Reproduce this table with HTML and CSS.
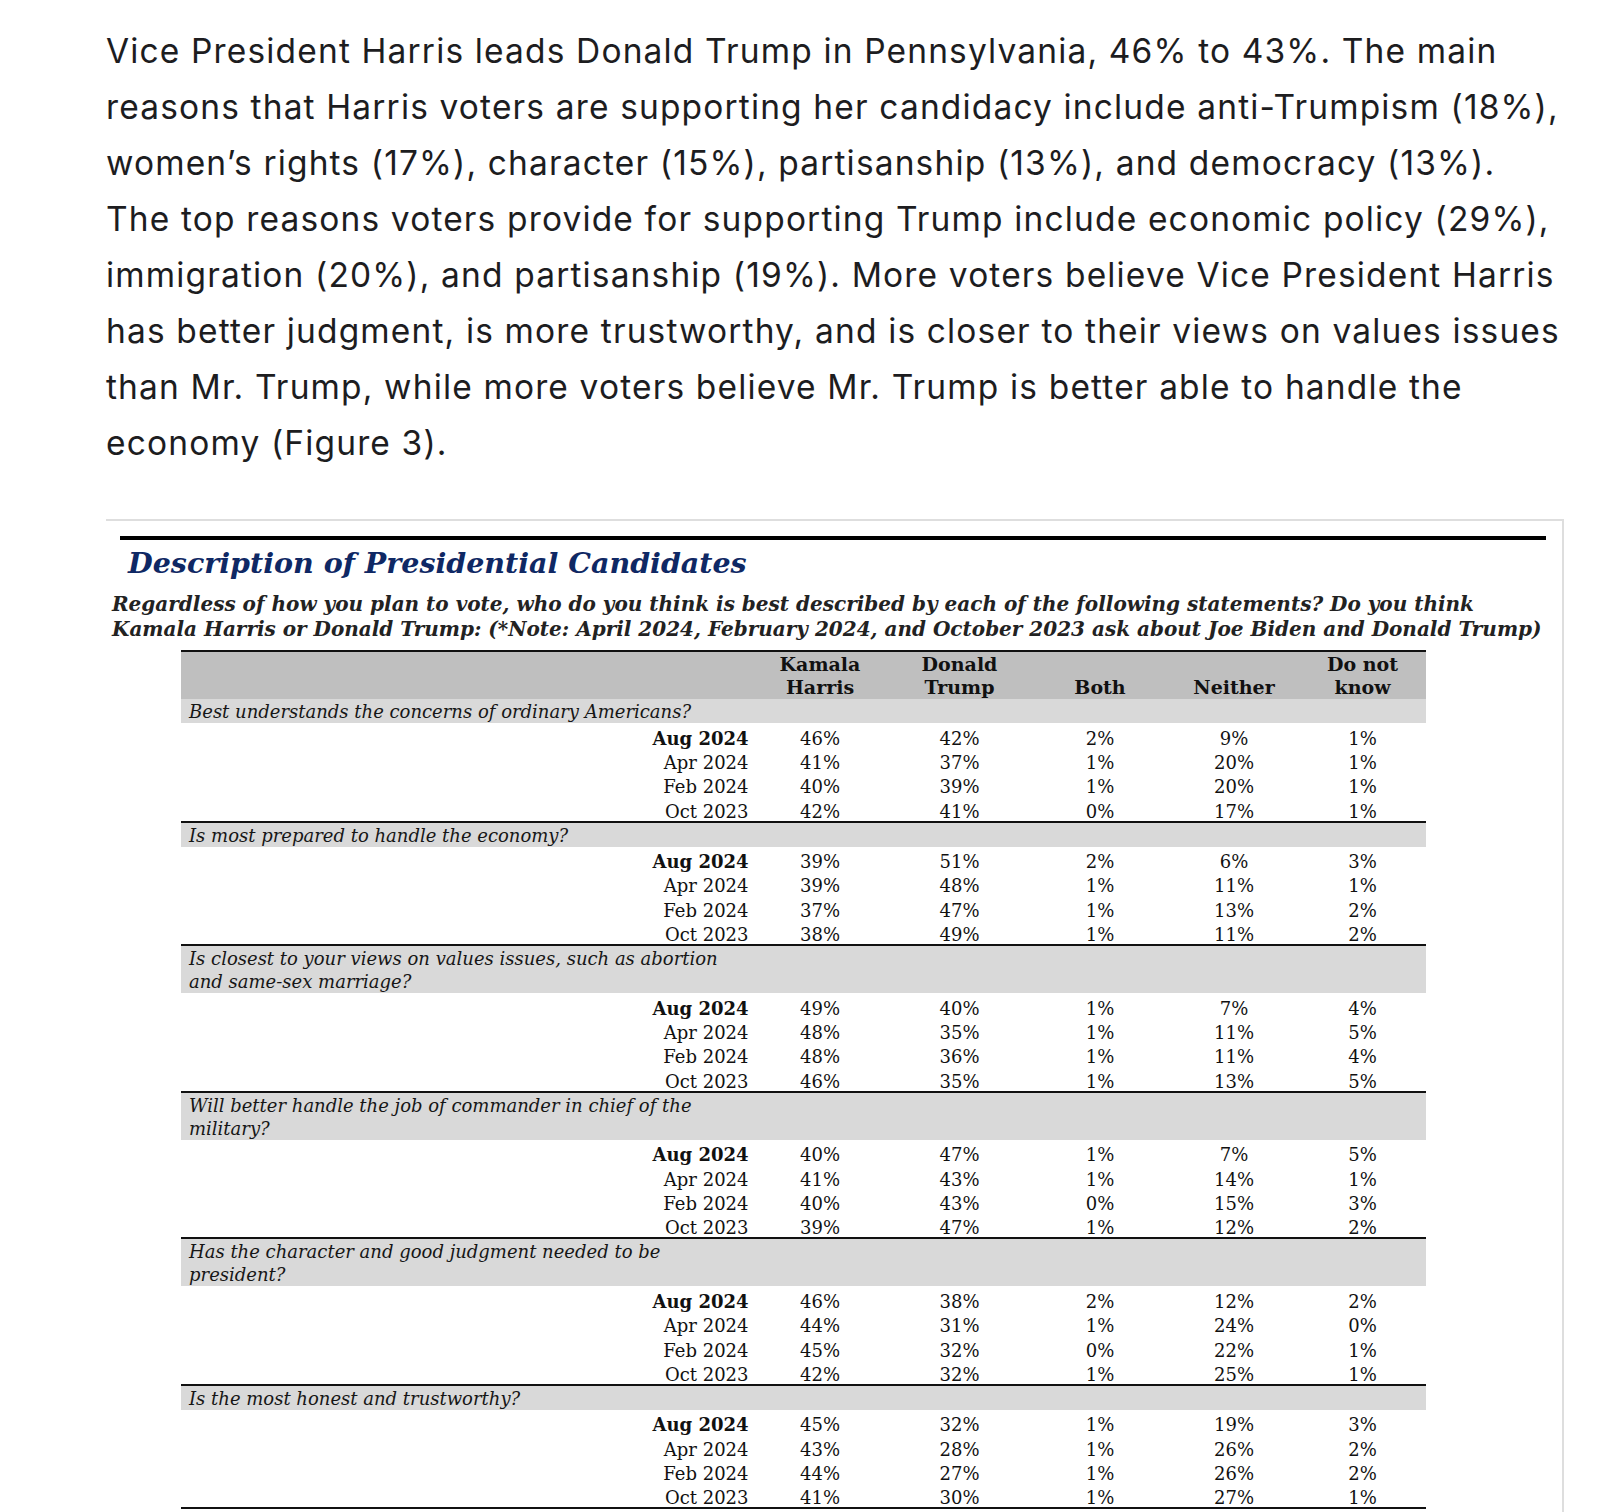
FILE: index.html
```html
<!DOCTYPE html>
<html lang="en">
<head>
<meta charset="utf-8">
<title>Description of Presidential Candidates</title>
<link rel="stylesheet" href="styles.css">
</head>
<body>
<main class="page">
  <p class="lead">Vice President Harris leads Donald Trump in Pennsylvania, 46% to 43%. The main reasons that Harris voters are supporting her candidacy include anti-Trumpism (18%), women’s rights (17%), character (15%), partisanship (13%), and democracy (13%). The top reasons voters provide for supporting Trump include economic policy (29%), immigration (20%), and partisanship (19%). More voters believe Vice President Harris has better judgment, is more trustworthy, and is closer to their views on values issues than Mr. Trump, while more voters believe Mr. Trump is better able to handle the economy (Figure 3).</p>

  <figure class="figure">
    <div class="rule"></div>
    <h2 class="fig-title">Description of Presidential Candidates</h2>
    <p class="fig-sub">Regardless of how you plan to vote, who do you think is best described by each of the following statements? Do you think<br>Kamala Harris or Donald Trump: (*Note: April 2024, February 2024, and October 2023 ask about Joe Biden and Donald Trump)</p>

    <div class="tbl">
      <div class="thead">
        <div></div>
        <div class="th">Kamala<br>Harris</div>
        <div class="th">Donald<br>Trump</div>
        <div class="th">Both</div>
        <div class="th">Neither</div>
        <div class="th">Do not<br>know</div>
      </div>

      <section class="sec">
        <div class="q">Best understands the concerns of ordinary Americans?</div>
        <div class="row"><div class="d b">Aug 2024</div><div>46%</div><div>42%</div><div>2%</div><div>9%</div><div>1%</div></div>
        <div class="row"><div class="d">Apr 2024</div><div>41%</div><div>37%</div><div>1%</div><div>20%</div><div>1%</div></div>
        <div class="row"><div class="d">Feb 2024</div><div>40%</div><div>39%</div><div>1%</div><div>20%</div><div>1%</div></div>
        <div class="row"><div class="d">Oct 2023</div><div>42%</div><div>41%</div><div>0%</div><div>17%</div><div>1%</div></div>
      </section>

      <section class="sec">
        <div class="q">Is most prepared to handle the economy?</div>
        <div class="row"><div class="d b">Aug 2024</div><div>39%</div><div>51%</div><div>2%</div><div>6%</div><div>3%</div></div>
        <div class="row"><div class="d">Apr 2024</div><div>39%</div><div>48%</div><div>1%</div><div>11%</div><div>1%</div></div>
        <div class="row"><div class="d">Feb 2024</div><div>37%</div><div>47%</div><div>1%</div><div>13%</div><div>2%</div></div>
        <div class="row"><div class="d">Oct 2023</div><div>38%</div><div>49%</div><div>1%</div><div>11%</div><div>2%</div></div>
      </section>

      <section class="sec">
        <div class="q">Is closest to your views on values issues, such as abortion<br>and same-sex marriage?</div>
        <div class="row"><div class="d b">Aug 2024</div><div>49%</div><div>40%</div><div>1%</div><div>7%</div><div>4%</div></div>
        <div class="row"><div class="d">Apr 2024</div><div>48%</div><div>35%</div><div>1%</div><div>11%</div><div>5%</div></div>
        <div class="row"><div class="d">Feb 2024</div><div>48%</div><div>36%</div><div>1%</div><div>11%</div><div>4%</div></div>
        <div class="row"><div class="d">Oct 2023</div><div>46%</div><div>35%</div><div>1%</div><div>13%</div><div>5%</div></div>
      </section>

      <section class="sec">
        <div class="q">Will better handle the job of commander in chief of the<br>military?</div>
        <div class="row"><div class="d b">Aug 2024</div><div>40%</div><div>47%</div><div>1%</div><div>7%</div><div>5%</div></div>
        <div class="row"><div class="d">Apr 2024</div><div>41%</div><div>43%</div><div>1%</div><div>14%</div><div>1%</div></div>
        <div class="row"><div class="d">Feb 2024</div><div>40%</div><div>43%</div><div>0%</div><div>15%</div><div>3%</div></div>
        <div class="row"><div class="d">Oct 2023</div><div>39%</div><div>47%</div><div>1%</div><div>12%</div><div>2%</div></div>
      </section>

      <section class="sec">
        <div class="q">Has the character and good judgment needed to be<br>president?</div>
        <div class="row"><div class="d b">Aug 2024</div><div>46%</div><div>38%</div><div>2%</div><div>12%</div><div>2%</div></div>
        <div class="row"><div class="d">Apr 2024</div><div>44%</div><div>31%</div><div>1%</div><div>24%</div><div>0%</div></div>
        <div class="row"><div class="d">Feb 2024</div><div>45%</div><div>32%</div><div>0%</div><div>22%</div><div>1%</div></div>
        <div class="row"><div class="d">Oct 2023</div><div>42%</div><div>32%</div><div>1%</div><div>25%</div><div>1%</div></div>
      </section>

      <section class="sec">
        <div class="q">Is the most honest and trustworthy?</div>
        <div class="row"><div class="d b">Aug 2024</div><div>45%</div><div>32%</div><div>1%</div><div>19%</div><div>3%</div></div>
        <div class="row"><div class="d">Apr 2024</div><div>43%</div><div>28%</div><div>1%</div><div>26%</div><div>2%</div></div>
        <div class="row"><div class="d">Feb 2024</div><div>44%</div><div>27%</div><div>1%</div><div>26%</div><div>2%</div></div>
        <div class="row"><div class="d">Oct 2023</div><div>41%</div><div>30%</div><div>1%</div><div>27%</div><div>1%</div></div>
      </section>
    </div>
  </figure>
</main>
</body>
</html>
```
FILE: styles.css
```css
html, body {
  margin: 0;
  padding: 0;
  background: #ffffff;
}

.page {
  width: 1460px;
  margin-left: 106px;
  padding-top: 23px;
}

.lead {
  margin: 0;
  width: 1456px;
  font-family: Inter, "Noto Sans", sans-serif;
  font-size: 33.5px;
  letter-spacing: 1.15px;
  line-height: 56px;
  color: #1d1d1f;
}

.figure {
  margin: 48px 0 0 0;
  width: 1458px;
  border-top: 2px solid #dedede;
  border-right: 2px solid #dedede;
  padding: 15px 0 40px 0;
  box-sizing: border-box;
  font-family: "DejaVu Serif", "Liberation Serif", serif;
  color: #161616;
}

.rule {
  height: 4px;
  background: #000;
  margin: 0 16px 0 14px;
}

.fig-title {
  margin: 6px 0 0 22px;
  font-size: 28.5px;
  line-height: 34px;
  font-weight: bold;
  font-style: italic;
  color: #0f2864;
}

.fig-sub {
  margin: 12px 0 0 6px;
  font-size: 20px;
  line-height: 25px;
  font-weight: bold;
  font-style: italic;
  white-space: nowrap;
  color: #222;
}

.tbl {
  margin: 8px 0 0 75px;
  width: 1245px;
  border-top: 2px solid #111;
}

.thead,
.row {
  display: grid;
  grid-template-columns: 570.5px 137px 142px 139px 129px 128px;
}

.thead {
  background: #bfbfbf;
  height: 47px;
  align-items: end;
}

.th {
  text-align: center;
  font-weight: bold;
  font-size: 19px;
  line-height: 23px;
  color: #111;
}

.sec {
  border-bottom: 2px solid #111;
}

.q {
  background: #d9d9d9;
  padding: 1px 0 0 8px;
  font-style: italic;
  font-size: 18px;
  line-height: 23px;
  color: #161616;
}

.row {
  height: 24.4px;
  box-sizing: border-box;
  padding-top: 5.5px;
  font-size: 18px;
  line-height: 20px;
  text-align: center;
  color: #111;
}

.row .d {
  text-align: right;
  padding-right: 3px;
}

.row .b {
  font-weight: bold;
}
```
